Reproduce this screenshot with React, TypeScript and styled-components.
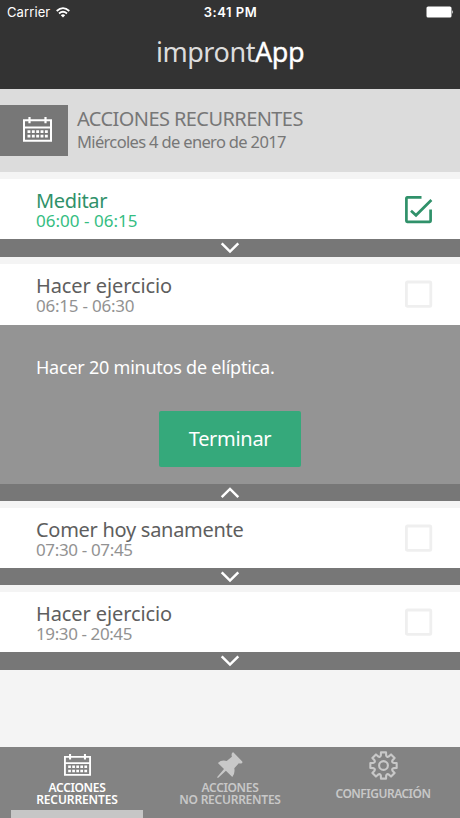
import React from "react";
import styled, { createGlobalStyle } from "styled-components";

const GlobalStyle = createGlobalStyle`
  * { box-sizing: border-box; }
  body { margin: 0; background: #f4f4f4; }
`;

const Screen = styled.div`
  width: 460px;
  height: 818px;
  display: flex;
  flex-direction: column;
  overflow: hidden;
  background: #f4f4f4;
  font-family: "Noto Sans", sans-serif;
`;

const Text = styled.span<{ $spacing?: number }>`
  display: inline-block;
  white-space: nowrap;
  letter-spacing: ${(p) => p.$spacing ?? 0}px;
`;

const Header = styled.header`
  height: 89px;
  flex: none;
  background: #333;
  color: #fff;
`;

const StatusBar = styled.div`
  height: 24px;
  display: grid;
  grid-template-columns: 1fr auto 1fr;
  align-items: center;
  padding: 0 6px 0 7px;
  font: 400 13px/24px Inter, sans-serif;
`;

const Carrier = styled.div`
  display: flex;
  align-items: center;
  gap: 6px;
`;

const Clock = styled.div`
  font-weight: 600;
`;

const Battery = styled.svg`
  justify-self: end;
`;

const AppTitle = styled.h1`
  margin: 9px 0 0;
  text-align: center;
  font-size: 27px;
  font-weight: 400;
  line-height: 38px;
  color: #dcdcdc;
`;

const Strong = styled.span`
  color: #fff;
  -webkit-text-stroke: 0.3px #fff;
`;

const Section = styled.section`
  height: 83px;
  flex: none;
  display: flex;
  align-items: flex-start;
  gap: 9px;
  padding-top: 16px;
  background: #dcdcdc;
  color: #777;
`;

const IconBlock = styled.div`
  width: 68px;
  height: 51px;
  display: flex;
  align-items: center;
  padding: 0 0 2px 23px;
  background: #777;
  color: #fff;
`;

const SectionText = styled.div`
  display: flex;
  flex-direction: column;
  padding-top: 2px;
`;

const SectionTitle = styled.div`
  font-size: 20px;
  line-height: 24px;
`;

const SectionDate = styled.div`
  font-size: 16.5px;
  line-height: 22px;
`;

const List = styled.main`
  flex: 1;
  padding-top: 7px;
`;

const Item = styled.article<{ $gap: number }>`
  margin-bottom: ${(p) => p.$gap}px;
`;

const Row = styled.div<{ $height: number }>`
  height: ${(p) => p.$height}px;
  display: flex;
  justify-content: space-between;
  padding: 12px 27px 0 36px;
  background: #fff;
`;

const ItemTitle = styled.div<{ $done?: boolean }>`
  font-size: 20px;
  line-height: 20px;
  color: ${(p) => (p.$done ? "#30916a" : "#5e5e5e")};
`;

const ItemTime = styled.div<{ $done?: boolean }>`
  font-size: 17px;
  line-height: 20px;
  color: ${(p) => (p.$done ? "#35bd82" : "#929292")};
`;

const CheckIcon = styled.svg`
  margin-top: 4px;
`;

const Detail = styled.div`
  height: 159px;
  display: flex;
  flex-direction: column;
  align-items: flex-start;
  padding: 30px 36px 0;
  background: #949494;
  color: #fff;
  font-size: 18px;
  line-height: 24px;
`;

const FinishButton = styled.button`
  width: 142px;
  height: 56px;
  align-self: center;
  margin-top: 32px;
  padding: 0 0 1px;
  border: 0;
  border-radius: 2px;
  background: #35a97b;
  color: #fff;
  font: 400 20px/24px "Noto Sans", sans-serif;
`;

const Toggle = styled.div<{ $height: number }>`
  height: ${(p) => p.$height}px;
  display: flex;
  justify-content: center;
  align-items: center;
  background: #777;
`;

const TabBar = styled.nav`
  height: 71px;
  flex: none;
  display: grid;
  grid-template-columns: 154px 152px 154px;
  background: #838383;
`;

const Tab = styled.div<{ $active?: boolean; $top: number }>`
  display: flex;
  flex-direction: column;
  align-items: center;
  padding-top: ${(p) => p.$top}px;
  color: ${(p) => (p.$active ? "#fff" : "#c8c8c8")};
`;

const TabLabel = styled.div<{ $top: number }>`
  margin-top: ${(p) => p.$top}px;
  font-size: 12px;
  font-weight: 600;
  line-height: 12px;
  height: 25px;
  display: flex;
  flex-direction: column;
  align-items: center;
`;

const Underline = styled.div`
  width: 132px;
  height: 8px;
  margin-top: 3px;
  background: #c6c6c6;
`;

function Calendar({ width, height }: { width: number; height: number }) {
  return (
    <svg width={width} height={height} viewBox="0 0 29 25" preserveAspectRatio="none" fill="none" stroke="currentColor">
      <path d="M1 3.2H28V23.8H1ZM1 10.5H28" strokeWidth="2" />
      <path d="M6.5 0V6.2M22.5 0V6.2" strokeWidth="2.2" />
      <path d="M4.5 14.6H25M4.5 19.2H25" strokeWidth="2.8" strokeDasharray="2.9 1.45" />
    </svg>
  );
}

function Checkbox({ done }: { done?: boolean }) {
  return done ? (
    <CheckIcon width="29" height="29" viewBox="0 0 29 29" fill="none" stroke="#30916a" strokeWidth="2.7">
      <path d="M17.5 2.4H3.2Q2.4 2.4 2.4 3.2V26Q2.4 26.8 3.2 26.8H25.8Q26.6 26.8 26.6 26V14.5" />
      <path d="M7 15.8L12 20.3L27.4 5" />
    </CheckIcon>
  ) : (
    <CheckIcon width="29" height="29" viewBox="0 0 29 29" fill="none" stroke="#efefef" strokeWidth="2.8">
      <rect x="2.4" y="2" width="24.4" height="24.4" rx="1" />
    </CheckIcon>
  );
}

function Chevron({ up }: { up?: boolean }) {
  return (
    <svg width="20" height="12" viewBox="0 0 20 12" fill="none" stroke="#fff" strokeWidth="2.5">
      <path d={up ? "M1.7 10.2L10 1.9L18.3 10.2" : "M1.7 1.3L10 9.6L18.3 1.3"} />
    </svg>
  );
}

function Pin() {
  return (
    <svg width="26" height="26" viewBox="0 0 26 26" fill="currentColor">
      <path d="M15.2 .8Q16.2 -.1 17 .9L25 9.2Q26 10.4 24.8 11.2Q23.5 11.8 21.8 11.2L17.3 16.3Q18.3 21.2 15.3 25L8.9 18.8L1 26L0 25.2L7 16.9L.9 10.9Q4.4 7.7 9.7 9L14.9 4.7Q14.1 2.3 15.2 .8Z" />
    </svg>
  );
}

const GEAR_CENTER = 14.5;

function gearPoint(angle: number, radius: number) {
  const x = GEAR_CENTER + radius * Math.sin(angle);
  const y = GEAR_CENTER - radius * Math.cos(angle);
  return `${x.toFixed(2)} ${y.toFixed(2)}`;
}

const gearPath =
  Array.from({ length: 8 }, (_, i) => {
    const a = (i * Math.PI) / 4;
    const step = Math.PI / 4;
    return `${i ? "" : `M${gearPoint(a - 0.26, 10.4)}`}L${gearPoint(a - 0.19, 13.4)}L${gearPoint(a + 0.19, 13.4)}L${gearPoint(a + 0.26, 10.4)}Q${gearPoint(a + step / 2, 8.6)} ${gearPoint(a + step - 0.26, 10.4)}`;
  }).join("") + "Z";

function Gear() {
  return (
    <svg width="29" height="29" viewBox="0 0 29 29" fill="none" stroke="currentColor" strokeWidth="2.1" strokeLinejoin="round">
      <path d={gearPath} />
      <circle cx="14.5" cy="14.5" r="4.4" />
    </svg>
  );
}

interface Action {
  title: string;
  titleSpacing: number;
  time: string;
  timeSpacing: number;
  height: number;
  bar: number;
  gap: number;
  done?: boolean;
  detail?: string;
}

const actions: Action[] = [
  { title: "Meditar", titleSpacing: -0.35, time: "06:00 - 06:15", timeSpacing: 0.02, height: 60, bar: 18, gap: 7, done: true },
  { title: "Hacer ejercicio", titleSpacing: -0.1, time: "06:15 - 06:30", timeSpacing: -0.22, height: 61, bar: 17, gap: 7, detail: "Hacer 20 minutos de elíptica." },
  { title: "Comer hoy sanamente", titleSpacing: -0.28, time: "07:30 - 07:45", timeSpacing: -0.35, height: 60, bar: 17, gap: 7 },
  { title: "Hacer ejercicio", titleSpacing: -0.1, time: "19:30 - 20:45", timeSpacing: -0.4, height: 60, bar: 18, gap: 0 },
];

export default function App() {
  return (
    <>
      <GlobalStyle />
      <Screen>
        <Header>
          <StatusBar>
            <Carrier>
              <Text $spacing={0.1}>Carrier</Text>
              <svg width="14" height="11" viewBox="0 0 14 11" fill="none" stroke="#fff" strokeWidth="1.8">
                <path d="M.7 4Q7-1.8 13.3 4M3 6.5Q7 3 11 6.5" />
                <path d="M4.8 8.2Q7 6.4 9.2 8.2L7 10.6Z" fill="#fff" stroke="none" />
              </svg>
            </Carrier>
            <Clock>
              <Text $spacing={0.5}>3:41 PM</Text>
            </Clock>
            <Battery width="28" height="12" viewBox="0 0 28 12" fill="#fff">
              <rect x=".5" y=".5" width="25" height="11" rx="1.6" />
              <path d="M26.3 4Q28 6 26.3 8Z" />
            </Battery>
          </StatusBar>
          <AppTitle>
            <Text $spacing={-0.45}>
              impront<Strong>App</Strong>
            </Text>
          </AppTitle>
        </Header>
        <Section>
          <IconBlock>
            <Calendar width={29} height={25} />
          </IconBlock>
          <SectionText>
            <SectionTitle>
              <Text $spacing={-0.58}>ACCIONES RECURRENTES</Text>
            </SectionTitle>
            <SectionDate>
              <Text $spacing={-0.66}>Miércoles 4 de enero de 2017</Text>
            </SectionDate>
          </SectionText>
        </Section>
        <List>
          {actions.map((a, i) => (
            <Item key={i} $gap={a.gap}>
              <Row $height={a.height}>
                <div>
                  <ItemTitle $done={a.done}>
                    <Text $spacing={a.titleSpacing}>{a.title}</Text>
                  </ItemTitle>
                  <ItemTime $done={a.done}>
                    <Text $spacing={a.timeSpacing}>{a.time}</Text>
                  </ItemTime>
                </div>
                <Checkbox done={a.done} />
              </Row>
              {a.detail && (
                <Detail>
                  <Text $spacing={-0.23}>{a.detail}</Text>
                  <FinishButton>
                    <Text $spacing={-0.3}>Terminar</Text>
                  </FinishButton>
                </Detail>
              )}
              <Toggle $height={a.bar}>
                <Chevron up={!!a.detail} />
              </Toggle>
            </Item>
          ))}
        </List>
        <TabBar>
          <Tab $active $top={7}>
            <Calendar width={27} height={22} />
            <TabLabel $top={6}>
              <Text $spacing={-0.35}>ACCIONES</Text>
              <Text $spacing={-0.1}>RECURRENTES</Text>
            </TabLabel>
            <Underline />
          </Tab>
          <Tab $top={5}>
            <Pin />
            <TabLabel $top={4}>
              <Text $spacing={-0.35}>ACCIONES</Text>
              <Text $spacing={-0.25}>NO RECURRENTES</Text>
            </TabLabel>
          </Tab>
          <Tab $top={4}>
            <Gear />
            <TabLabel $top={8}>
              <Text $spacing={-0.5}>CONFIGURACIÓN</Text>
            </TabLabel>
          </Tab>
        </TabBar>
      </Screen>
    </>
  );
}
